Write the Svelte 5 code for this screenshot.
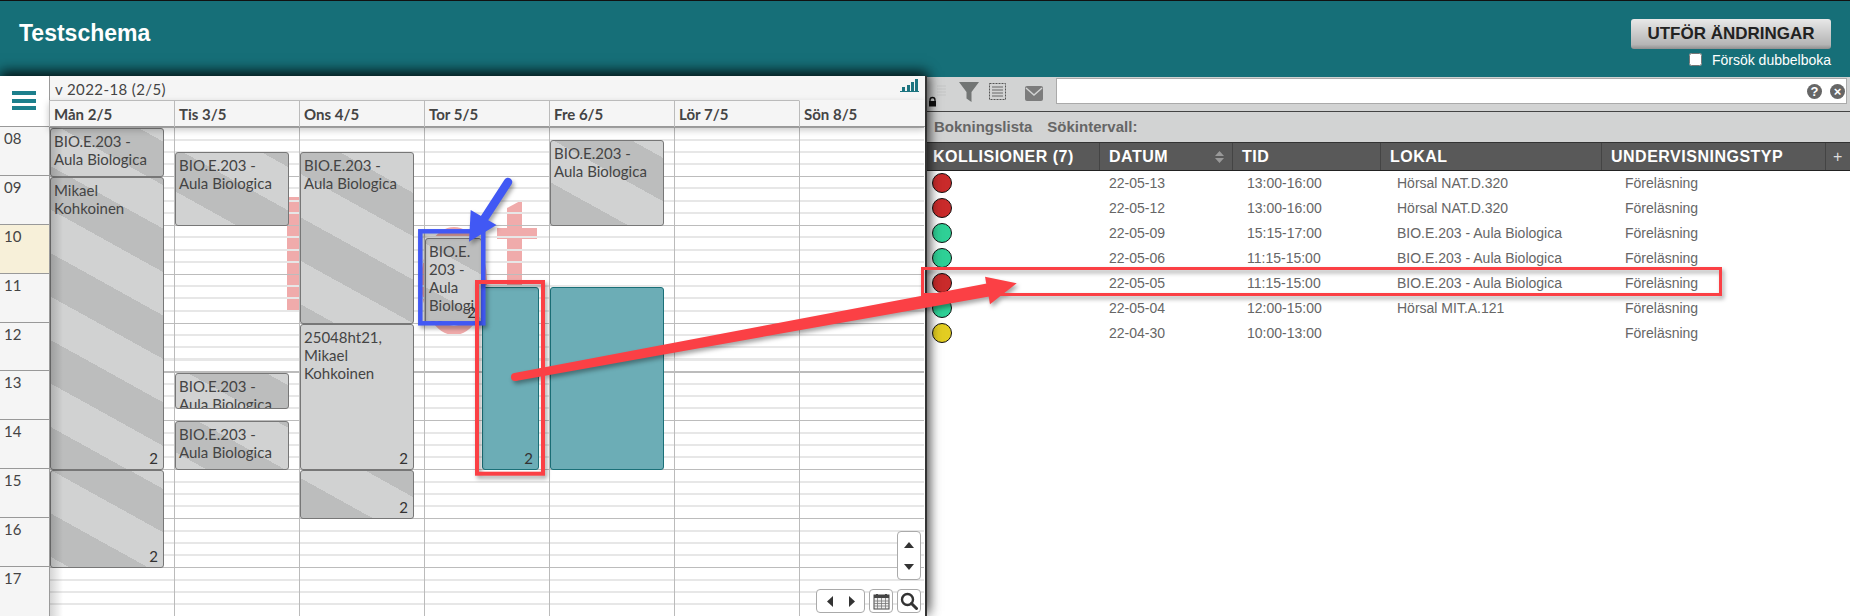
<script>
  const days = ['Mån 2/5', 'Tis 3/5', 'Ons 4/5', 'Tor 5/5', 'Fre 6/5', 'Lör 7/5', 'Sön 8/5']
  const hours = ['08', '09', '10', '11', '12', '13', '14', '15', '16', '17']
  const hourH = 48.9
  const aula = 'BIO.E.203 - Aula Biologica'

  const events = [
    [
      { from: 8, to: 9, text: aula },
      { from: 9, to: 15, text: 'Mikael Kohkoinen', count: 2 },
      { from: 15, to: 17, text: '', count: 2 }
    ],
    [
      { from: 8.5, to: 10, text: aula },
      { from: 13, to: 13.75, text: aula },
      { from: 14, to: 15, text: aula }
    ],
    [
      { from: 8.5, to: 12, text: aula },
      { from: 12, to: 15, text: '25048ht21, Mikael Kohkoinen', count: 2, kind: 'plain' },
      { from: 15, to: 16, text: '', count: 2 }
    ],
    [
      { from: 10.25, to: 12, text: aula, count: 2, width: 57 },
      { from: 11.25, to: 15, text: '', count: 2, kind: 'teal', left: 57, width: 57 }
    ],
    [
      { from: 8.25, to: 10, text: aula },
      { from: 11.25, to: 15, text: '', kind: 'teal' }
    ],
    [],
    []
  ]

  const rows = [
    { state: 'red', date: '22-05-13', time: '13:00-16:00', room: 'Hörsal NAT.D.320' },
    { state: 'red', date: '22-05-12', time: '13:00-16:00', room: 'Hörsal NAT.D.320' },
    { state: 'green', date: '22-05-09', time: '15:15-17:00', room: 'BIO.E.203 - Aula Biologica' },
    { state: 'green', date: '22-05-06', time: '11:15-15:00', room: 'BIO.E.203 - Aula Biologica' },
    { state: 'red', date: '22-05-05', time: '11:15-15:00', room: 'BIO.E.203 - Aula Biologica' },
    { state: 'green', date: '22-05-04', time: '12:00-15:00', room: 'Hörsal MIT.A.121' },
    { state: 'yellow', date: '22-04-30', time: '10:00-13:00', room: '' }
  ]

  const place = e => {
    let s = `top:${(e.from - 8) * hourH + 1}px;height:${(e.to - e.from) * hourH}px;`
    s += `left:${e.left || 0}px;width:${e.width || 114}px;`
    return s
  }
</script>

<div class="page">
  <header class="top">
    <h1>Testschema</h1>
    <div class="actions">
      <button class="apply">UTFÖR ÄNDRINGAR</button>
      <label class="double"><input type="checkbox" /> Försök dubbelboka</label>
    </div>
  </header>

  <div class="main">
    <section class="cal">
      <aside class="times">
        <div class="menu"><span></span><span></span><span></span></div>
        {#each hours as h}
          <div class="hour" class:now={h === '10'}>{h}</div>
        {/each}
      </aside>

      <div class="sched">
        <div class="week">
          <span>v 2022-18 (2/5)</span>
          <svg class="bars" width="19" height="13" viewBox="0 0 19 13">
            <path d="M0 12h19v1H0zM2 8h3v4H2zM7 6h3v6H7zM11 3h3v9h-3zM15 0h3v12h-3z" fill="#1c7480" />
          </svg>
        </div>
        <div class="days">
          {#each days as d, i}
            <div class="day" class:open={i === 6}>{d}</div>
          {/each}
        </div>
        <div class="grid">
          <i class="pink bar-a"></i>
          <i class="pink ring"></i>
          <i class="pink bar-b"></i>
          <i class="pink bar-c"></i>
          {#each events as col}
            <div class="col">
              {#each col as e}
                <div class="ev {e.kind || 'striped'}" style={place(e)}>
                  {e.text}
                  {#if e.count}<b class="count">{e.count}</b>{/if}
                </div>
              {/each}
            </div>
          {/each}
          <div class="edge"></div>
          <div class="tools">
            <div class="tbtn updown">
              <svg width="12" height="6" viewBox="0 0 12 6"><path d="M6 0l5 6H1z" fill="#333" /></svg>
              <svg width="12" height="6" viewBox="0 0 12 6"><path d="M6 6L1 0h10z" fill="#333" /></svg>
            </div>
            <div class="toolrow">
              <div class="tbtn nav">
                <svg width="7" height="11" viewBox="0 0 7 11"><path d="M0 5.5L6 0v11z" fill="#333" /></svg>
                <svg width="7" height="11" viewBox="0 0 7 11"><path d="M7 5.5L1 0v11z" fill="#333" /></svg>
              </div>
              <div class="tbtn square">
                <svg width="17" height="18" viewBox="0 0 17 18">
                  <rect x="1" y="3" width="15" height="14" fill="#eee" stroke="#444" />
                  <path d="M1 3h15v3H1z" fill="#444" />
                  <path d="M4 2v3M13 2v3" stroke="#444" stroke-width="2" />
                  <path d="M1 9h15M1 11.500h15M1 14h15M4.500 6v11M8.500 6v11M12.500 6v11" stroke="#777" stroke-width=".8" />
                </svg>
              </div>
              <div class="tbtn square">
                <svg width="18" height="18" viewBox="0 0 18 18">
                  <circle cx="7.500" cy="7.500" r="5.500" fill="none" stroke="#333" stroke-width="2.400" />
                  <path d="M11.500 11.500l5 5" stroke="#333" stroke-width="3" stroke-linecap="round" />
                </svg>
              </div>
            </div>
          </div>
        </div>
      </div>
    </section>

    <section class="panel">
      <div class="toolbar">
        <svg class="tool-icons" width="129" height="34" viewBox="0 0 129 34">
          <path d="M10 9h9M10 12h9M10 15h9M10 18h9" stroke="#c4c5c5" stroke-width="1" />
          <path d="M3 25v-2a2.500 2.500 0 015 0v2" fill="none" stroke="#111" stroke-width="1.300" />
          <rect x="2" y="24" width="7" height="5.500" fill="#111" />
          <path d="M32 5h20l-7.500 10v10l-5-3.500V15z" fill="#727574" />
          <rect x="62.500" y="6.500" width="16" height="16" fill="none" stroke="#555" stroke-dasharray="2 1" />
          <path d="M65 10h11M65 13h11M65 16h11M65 19h11" stroke="#666" />
          <rect x="98" y="9" width="18" height="15" rx="2" fill="#7c7c7c" />
          <path d="M99 11l8 7 8-7" fill="none" stroke="#d2d3d3" stroke-width="1.500" />
        </svg>
        <div class="search">
          <input type="text" />
          <span class="round">?</span>
          <span class="round">×</span>
        </div>
      </div>
      <div class="crumbs"><b>Bokningslista</b><b>Sökintervall:</b></div>
      <div class="thead">
        <div class="th" style="padding-left:6px">KOLLISIONER (7)</div>
        <div class="th sort">
          DATUM
          <svg width="9" height="12" viewBox="0 0 9 12"><path d="M4.500 0L9 5H0zM4.500 12L0 7h9z" fill="#999" /></svg>
        </div>
        <div class="th">TID</div>
        <div class="th">LOKAL</div>
        <div class="th">UNDERVISNINGSTYP</div>
        <div class="th plus">+</div>
      </div>
      {#each rows as r}
        <div class="tr">
          <div class="td-state"><span class="dot {r.state}"></span></div>
          <div class="td-date">{r.date}</div>
          <div class="td-time">{r.time}</div>
          <div class="td-room">{r.room}</div>
          <div class="td-type">Föreläsning</div>
        </div>
      {/each}
    </section>
  </div>

  <svg class="marks" width="1850" height="616" viewBox="0 0 1850 616">
    <g class="shade">
      <rect x="420.300" y="231.300" width="63" height="92" fill="none" stroke="#4158f4" stroke-width="4.500" />
      <path d="M508 182L482 222" stroke="#4158f4" stroke-width="8.500" stroke-linecap="round" />
      <path d="M469 241.700L470.700 210L496.500 225z" fill="#4158f4" />
    </g>
    <g class="shade">
      <rect x="477" y="282" width="66" height="191.700" fill="none" stroke="#fb4045" stroke-width="4" />
      <rect x="922.500" y="268.500" width="798" height="26" fill="none" stroke="#fb4045" stroke-width="3" />
      <circle cx="515" cy="377" r="4" fill="#fb4045" />
      <path d="M515.700 381L514.300 373L986.800 283.600L989.200 296.400z" fill="#fb4045" />
      <path d="M1016.700 283.300L985 276.700L990 304.300z" fill="#fb4045" />
    </g>
  </svg>
</div>

<style>
  :global(body) {
    margin: 0;
    background: #fff;
  }

  .page {
    position: relative;
    width: 1850px;
    height: 616px;
    overflow: hidden;
    font-family: "Liberation Sans", Arial, sans-serif;
  }

  .top {
    height: 75px;
    display: flex;
    justify-content: space-between;
    background: #166f78;
    border-top: 1px solid #111;
  }

  h1 {
    margin: 19px 0 0 19px;
    font-size: 23px;
    line-height: 26px;
    font-weight: bold;
    color: #fff;
  }

  .actions {
    display: flex;
    flex-direction: column;
    align-items: flex-end;
    padding: 18px 19px 0 0;
  }

  .apply {
    width: 200px;
    height: 30px;
    padding: 0;
    border: 0;
    border-radius: 3px;
    background: linear-gradient(#e8e8e8, #b5b5b5 85%, #8f8f8f);
    font-family: "Liberation Sans Narrow", "Liberation Sans", sans-serif;
    font-size: 17px;
    font-weight: bold;
    color: #222;
  }

  .double {
    display: flex;
    align-items: center;
    margin-top: 3px;
    color: #fff;
    font-size: 14px;
    line-height: 16px;
    white-space: pre;
  }

  .double input {
    width: 13px;
    height: 13px;
    margin: 0 6px 2px 0;
  }

  .main {
    display: flex;
    height: 540px;
  }

  /* calendar */
  .cal {
    position: relative;
    z-index: 2;
    display: flex;
    flex: 0 0 927px;
    box-sizing: border-box;
    border-right: 2px solid #333;
    background: #fff;
    box-shadow: 0 -5px 12px rgba(0, 0, 0, 0.75), 4px 0 10px rgba(0, 0, 0, 0.25);
    font-family: Lato, sans-serif;
    color: #444;
  }

  .times {
    flex: 0 0 49px;
    background: #f5f5f5;
  }

  .menu {
    height: 50px;
    box-sizing: border-box;
    padding: 15px 0 0 12px;
    background: #fff;
  }

  .menu span {
    display: block;
    width: 24px;
    height: 4px;
    margin-bottom: 3.500px;
    background: #1c7f8c;
  }

  .hour {
    height: 48.900px;
    box-sizing: border-box;
    padding: 2px 0 0 4px;
    border-top: 1px solid #999;
    font-size: 15px;
    line-height: 18px;
  }

  .hour.now {
    background: #f7f0d9;
  }

  .sched {
    flex: 1;
    display: flex;
    flex-direction: column;
    min-width: 0;
  }

  .week {
    height: 24px;
    display: flex;
    justify-content: space-between;
    padding-left: 5px;
    background: #f5f5f5;
    border-left: 1px solid #999;
    font-size: 15px;
    line-height: 26px;
    letter-spacing: 0.4px;
  }

  .bars {
    margin: 3px 6px 0 0;
  }

  .days {
    position: relative;
    z-index: 3;
    display: grid;
    grid-template-columns: repeat(7, 125px);
    height: 26px;
    background: #f5f5f5;
    border-bottom: 1px solid #999;
    box-shadow: 0 3px 7px rgba(0, 0, 0, 0.22);
  }

  .day {
    box-sizing: border-box;
    padding-left: 4px;
    border-left: 1px solid #bbb;
    border-top: 1px solid #bbb;
    font-size: 15px;
    font-weight: bold;
    line-height: 26px;
  }

  .day.open {
    border-top-color: transparent;
  }

  .grid {
    position: relative;
    flex: 1;
    display: grid;
    grid-template-columns: repeat(7, 125px);
    overflow: hidden;
    background: #fff;
  }

  .col {
    position: relative;
    z-index: 1;
    border-left: 1px solid #bbb;
    background-image: repeating-linear-gradient(
      to bottom,
      #bcbcbc 0 1px,
      transparent 1px 11.500px,
      #e7e7e7 11.500px 13.500px,
      transparent 13.500px 23.700px,
      #e7e7e7 23.700px 25.700px,
      transparent 25.700px 35.900px,
      #e7e7e7 35.900px 37.900px,
      transparent 37.900px 48.900px
    );
  }

  .pink {
    position: absolute;
    display: block;
    background: #f0abab;
  }

  .bar-a {
    left: 238px;
    top: 70px;
    width: 13px;
    height: 115px;
  }

  .bar-b {
    left: 458px;
    top: 73px;
    width: 15px;
    height: 90px;
    clip-path: polygon(0 8px, 100% 0, 100% 100%, 0 100%);
  }

  .bar-c {
    left: 448px;
    top: 101px;
    width: 40px;
    height: 11px;
  }

  .ring {
    left: 372px;
    top: 100px;
    width: 48px;
    height: 90px;
    border: 9px solid #f0abab;
    border-radius: 50%;
    background: none;
  }

  .ev {
    position: absolute;
    box-sizing: border-box;
    padding: 3px 3px 0;
    overflow: hidden;
    overflow-wrap: anywhere;
    border: 1px solid #777;
    border-radius: 3px;
    font-size: 15px;
    line-height: 18px;
    color: #444;
  }

  .striped {
    background: repeating-linear-gradient(29deg, #bcbdbd 0 38px, #d1d2d2 38px 76px) fixed;
  }

  .plain {
    background: #d1d2d2;
  }

  .teal {
    background: #6cadb6;
    border-color: #1b7078;
  }

  .count {
    position: absolute;
    right: 5px;
    bottom: 2px;
    font-size: 15px;
    font-weight: normal;
    line-height: 18px;
    color: #333;
  }

  .edge {
    position: absolute;
    z-index: 2;
    left: 0;
    top: 0;
    bottom: 0;
    width: 14px;
    background: linear-gradient(to right, rgba(0, 0, 0, 0.18), rgba(0, 0, 0, 0));
  }

  .tools {
    position: absolute;
    z-index: 2;
    right: 4px;
    bottom: 3px;
    display: flex;
    flex-direction: column;
    align-items: flex-end;
    gap: 9px;
  }

  .toolrow {
    display: flex;
    gap: 4px;
  }

  .tbtn {
    display: flex;
    align-items: center;
    justify-content: center;
    box-sizing: border-box;
    background: #fff;
    border: 1px solid #aaa;
    border-radius: 4px;
  }

  .updown {
    width: 24px;
    height: 49px;
    flex-direction: column;
    gap: 16px;
  }

  .nav {
    width: 49px;
    height: 24px;
    gap: 14px;
  }

  .square {
    width: 24px;
    height: 24px;
  }

  /* booking list */
  .panel {
    flex: 1;
    min-width: 0;
    background: #fff;
  }

  .toolbar {
    display: flex;
    height: 34px;
    background: #d2d3d3;
    border-top: 1px solid #166f78;
    border-bottom: 1px solid #444;
  }

  .tool-icons {
    flex: none;
  }

  .search {
    position: relative;
    flex: 1;
    display: flex;
    justify-content: flex-end;
    align-items: center;
    gap: 8px;
    height: 26px;
    margin: 1px 3px 0 0;
    padding-right: 2px;
  }

  .search input {
    position: absolute;
    left: 0;
    top: 0;
    width: 100%;
    height: 100%;
    box-sizing: border-box;
    margin: 0;
    border: 1px solid #aaa;
    background: #fff;
  }

  .round {
    position: relative;
    width: 15px;
    height: 15px;
    border-radius: 50%;
    background: #666;
    color: #fff;
    font-size: 13px;
    font-weight: bold;
    line-height: 15px;
    text-align: center;
  }

  .crumbs {
    display: flex;
    gap: 15px;
    height: 30px;
    padding-left: 7px;
    background: #d2d3d3;
    border-bottom: 1px solid #333;
    color: #666;
    font-size: 15px;
    line-height: 30px;
  }

  .thead,
  .tr {
    display: grid;
    grid-template-columns: 173px 133px 148px 221px 224px 1fr;
  }

  .thead {
    height: 27px;
    background: #595959;
    border-bottom: 1px solid #222;
  }

  .th {
    padding-left: 9px;
    border-right: 1px solid #444;
    font-family: "Liberation Sans Narrow", "Liberation Sans", sans-serif;
    font-size: 16px;
    font-weight: bold;
    line-height: 27px;
    letter-spacing: 0.5px;
    color: #fff;
  }

  .sort {
    display: flex;
    justify-content: space-between;
    align-items: center;
    padding-right: 8px;
  }

  .plus {
    padding: 0;
    border: 0;
    font-weight: normal;
    text-align: center;
    color: #ddd;
  }

  .tr {
    height: 25px;
    color: #666;
    font-size: 14px;
    line-height: 25px;
  }

  .td-state {
    padding: 2px 0 0 5px;
  }

  .td-date {
    padding-left: 9px;
  }

  .td-time {
    padding-left: 14px;
  }

  .td-room {
    padding-left: 16px;
  }

  .td-type {
    padding-left: 23px;
  }

  .dot {
    display: block;
    width: 20px;
    height: 20px;
    box-sizing: border-box;
    border: 1px solid #111;
    border-radius: 50%;
  }

  .red {
    background: #c92b2b;
  }

  .green {
    background: #2fd096;
  }

  .yellow {
    background: #e3cd22;
  }

  .marks {
    position: absolute;
    z-index: 5;
    left: 0;
    top: 0;
    pointer-events: none;
  }

  .shade {
    filter: drop-shadow(2px 3px 2px rgba(0, 0, 0, 0.35));
  }
</style>
